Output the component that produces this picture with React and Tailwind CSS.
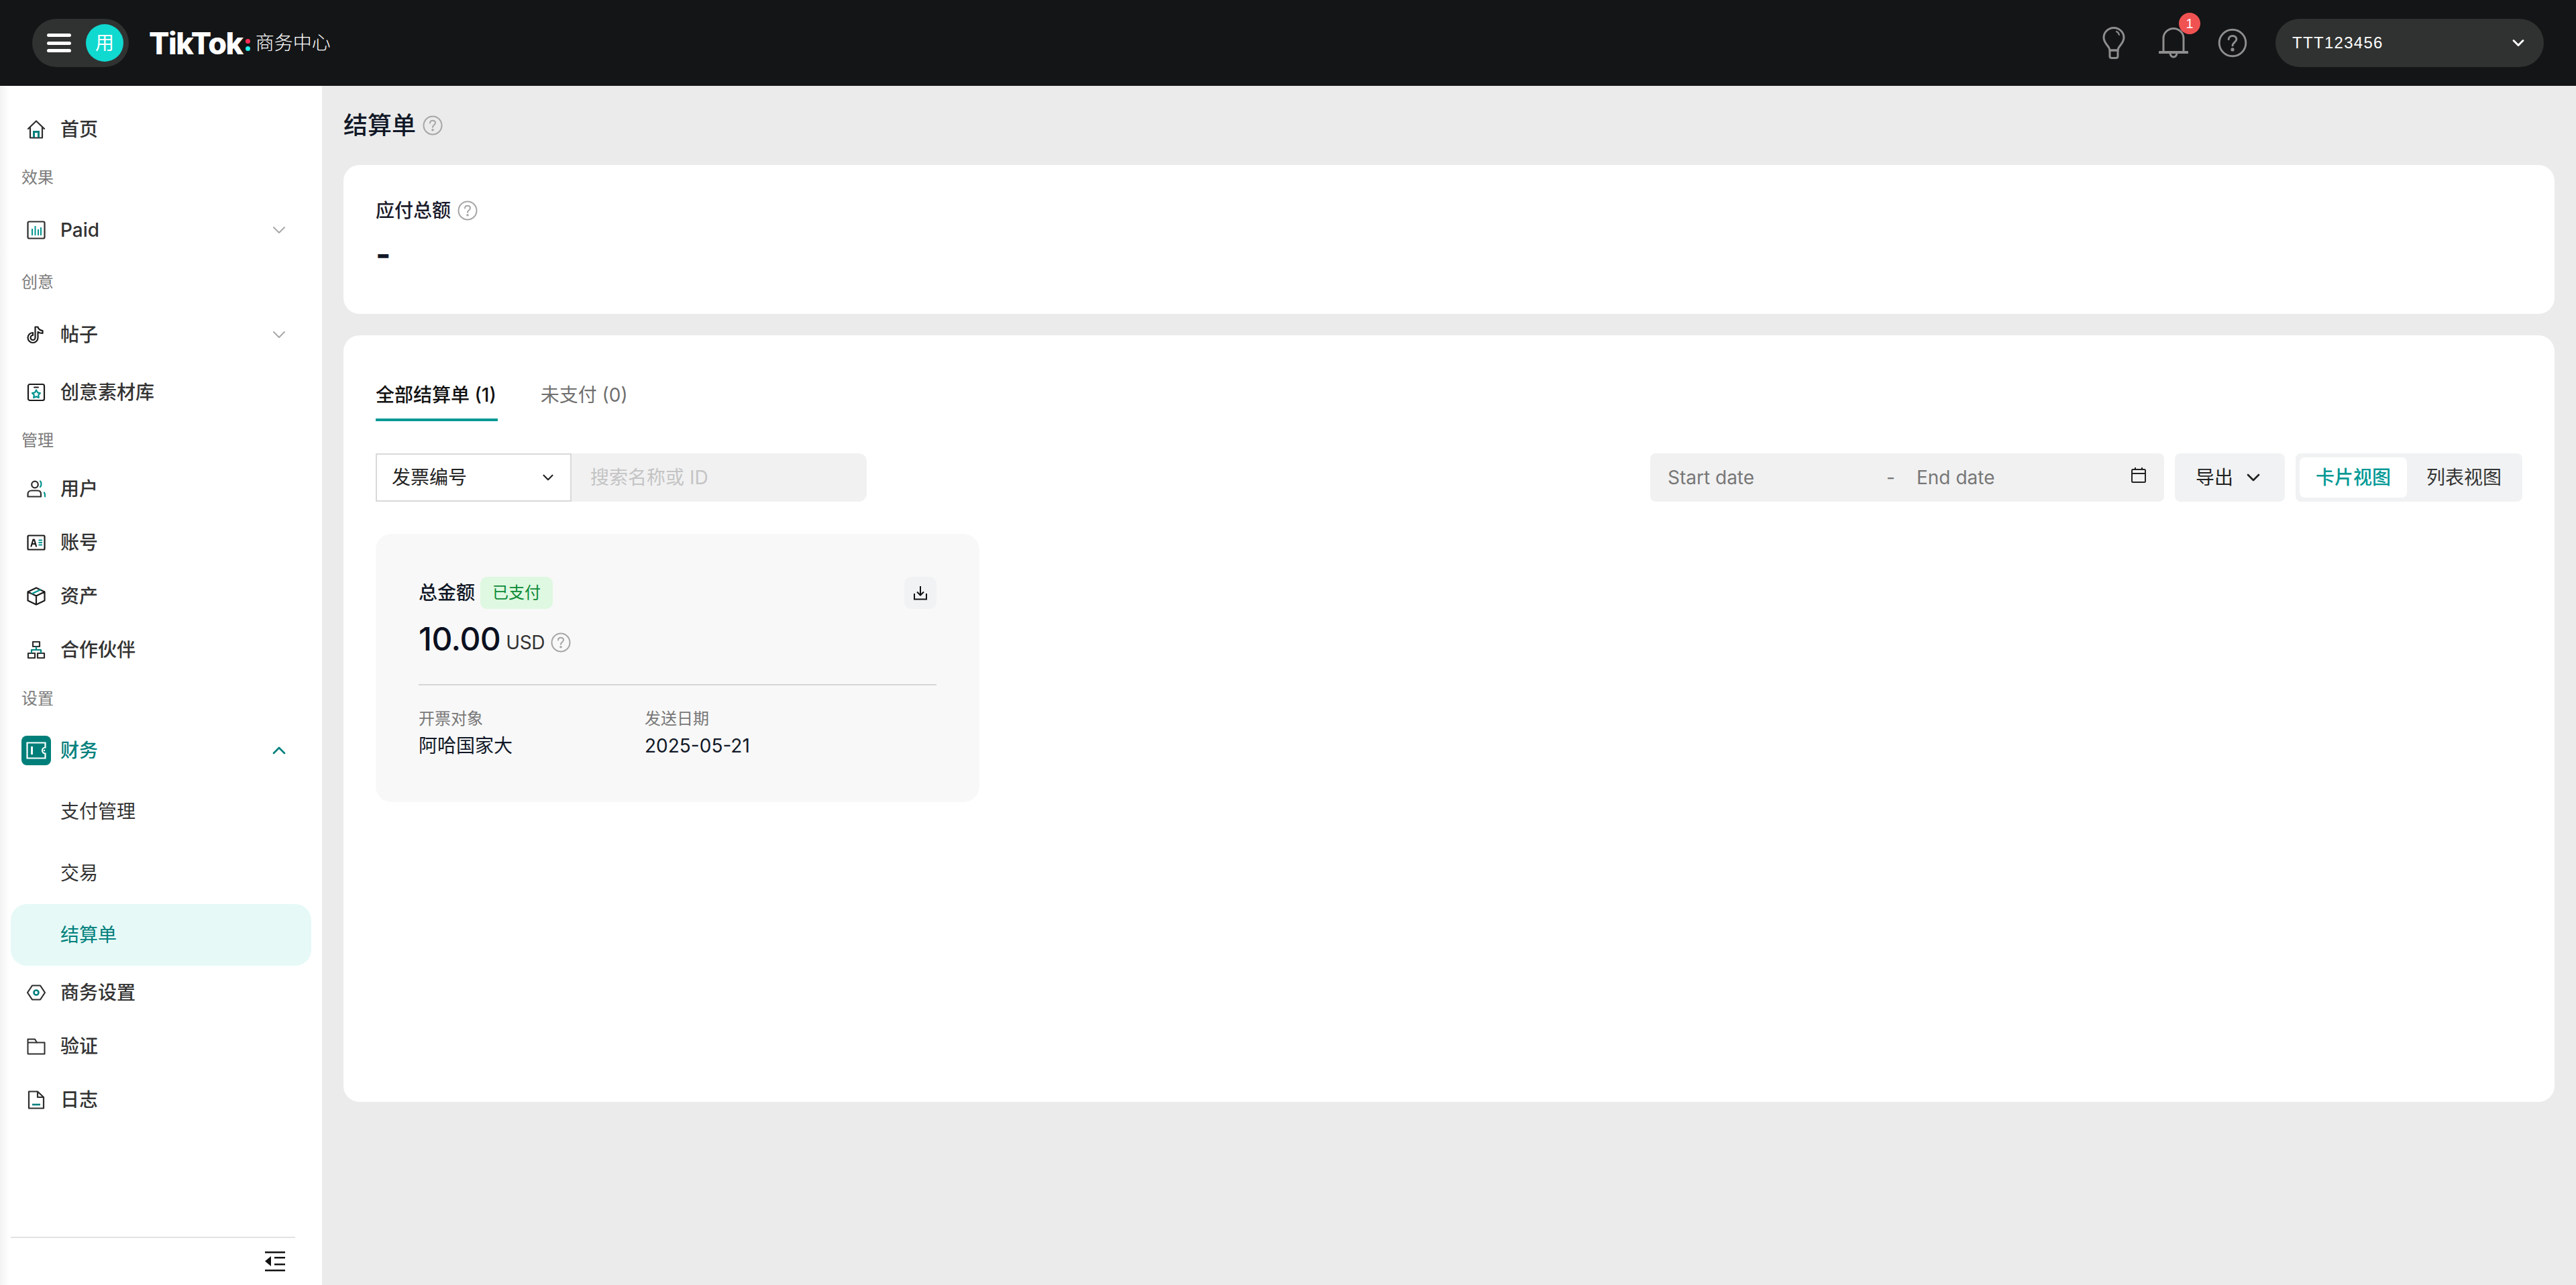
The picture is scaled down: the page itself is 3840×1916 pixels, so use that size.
import React from "react"
import { ChevronDown, ChevronUp } from "lucide-react"

const DARK = "#2e2e2e"
const TEAL = "#00948f"

function Svg({ children, className = "w-[28px] h-[28px]" }) {
    return (
        <svg viewBox="0 0 28 28" fill="none" strokeWidth="2" strokeLinecap="round" strokeLinejoin="round" className={`shrink-0 ${className}`}>
            {children}
        </svg>
    )
}

const HomeIcon = () => (
    <Svg>
        <path d="M2 13 14 1.500 26 13M5 10.500V26.500H23V10.500" stroke={DARK} strokeWidth="2.200" />
        <path d="M10.500 26V17.500H17.500V26" stroke="#00807c" strokeWidth="3" strokeLinecap="butt" strokeLinejoin="miter" />
    </Svg>
)
const PaidIcon = () => (
    <Svg>
        <rect x="1.500" y="1.500" width="25" height="25" rx="2" stroke={DARK} strokeWidth="2.200" />
        <path d="M8 12v10M12.500 8v14M17 13v9M21 10v12" stroke={TEAL} strokeLinecap="butt" />
    </Svg>
)
const PostIcon = () => (
    <Svg>
        <path d="M12.500 2.500H16.500C17 5.500 19.500 7.500 23.500 8V12C20.500 12 18.500 11.200 16.500 10V18.500A7.500 7.500 0 1 1 9 11V15A3.500 3.500 0 1 0 12.500 18.500Z" stroke="#1c1c1c" strokeWidth="2.200" />
    </Svg>
)
const CreativeIcon = () => (
    <Svg>
        <rect x="2" y="2" width="24" height="24" rx="2.500" stroke="#1c1c1c" strokeWidth="2.200" />
        <path d="M11 6.500H17" stroke="#1c1c1c" />
        <path d="M14 10.500 16 14.300 20 15 17.200 18 17.800 22 14 20.200 10.200 22 10.800 18 8 15 12 14.300Z" stroke={TEAL} strokeWidth="2.200" />
    </Svg>
)
const UserIcon = () => (
    <Svg>
        <circle cx="12" cy="7.500" r="4.800" stroke={DARK} strokeWidth="2.200" />
        <path d="M1.500 25.500V21.500C1.500 18.500 4 16.500 7 16.500H16C19 16.500 21 18.500 21 21.500V25.500Z" stroke={DARK} strokeWidth="2.200" />
        <path d="M20 2.500C22 4.500 22 9 20 11M26 19.500C27 21 27.200 23 27.200 25.500" stroke={TEAL} strokeWidth="2.200" />
    </Svg>
)
const AccountIcon = () => (
    <Svg>
        <rect x="1.500" y="3.500" width="25" height="21" rx="1.500" stroke="#1c1c1c" strokeWidth="2.200" />
        <path d="M6.500 19.500 9.500 9.500H11L14 19.500M8 16H12.500" stroke="#1c1c1c" strokeWidth="2.200" />
        <path d="M17.500 10.500H23M17.500 14H23M17.500 17.500H23" stroke={TEAL} strokeWidth="2" strokeLinecap="butt" />
    </Svg>
)
const AssetIcon = () => (
    <Svg>
        <path d="M14 1.500 26.500 7.500V20.500L14 26.500 1.500 20.500V7.500ZM1.500 7.500 14 13.500 26.500 7.500M14 13.500V26.500" stroke="#1c1c1c" strokeWidth="2.200" />
        <path d="M8 10 20 4.500" stroke={TEAL} strokeWidth="2.400" />
    </Svg>
)
const PartnerIcon = () => (
    <Svg>
        <rect x="9" y="2" width="10" height="7" stroke={DARK} strokeWidth="2.200" />
        <rect x="2" y="19" width="10" height="7" stroke={DARK} strokeWidth="2.200" />
        <rect x="16" y="19" width="10" height="7" stroke={DARK} strokeWidth="2.200" />
        <path d="M14 9V14M7 19V14H21V19" stroke="#00807c" strokeWidth="2.200" strokeLinecap="butt" />
    </Svg>
)
const SettingIcon = () => (
    <Svg>
        <path d="M8 3.500H20L27 14 20 24.500H8L1 14Z" stroke={DARK} strokeWidth="2.200" />
        <circle cx="14" cy="14" r="3.500" stroke="#00807c" strokeWidth="2.600" />
    </Svg>
)
const FolderIcon = () => (
    <Svg>
        <path d="M1.500 25V3.500H12L15 8.500H26.500V25.500H2Z" stroke={DARK} strokeWidth="2" />
        <path d="M2 8.500H15" stroke={DARK} strokeWidth="2" />
    </Svg>
)
const LogIcon = () => (
    <Svg>
        <path d="M3 1.500H16L25 10V26.500H3ZM16 2V10H25" stroke={DARK} strokeWidth="2.200" />
        <path d="M8 21H20" stroke="#00807c" strokeWidth="2.600" strokeLinecap="butt" />
    </Svg>
)
const WalletIcon = () => (
    <div className="w-[44px] h-[44px] rounded-[8px] bg-[#007f7a] flex items-center justify-center shrink-0 -ml-[8px] mr-[-8px]">
        <svg viewBox="0 0 30 26" fill="none" stroke="#fff" strokeWidth="2.200" className="w-[30px] h-[26px]">
            <path d="M1.500 1.500H28.500V8.500A4.500 4.500 0 0 0 28.500 17.500V24.500H1.500Z" />
            <path d="M8.500 7V19" strokeWidth="3" />
            <circle cx="27" cy="13" r="1.200" fill="#fff" stroke="none" />
        </svg>
    </div>
)

function HelpCircle({ size = "w-[30px] h-[30px]", color = "#a6a6a6", width = 2 }) {
    return (
        <svg viewBox="0 0 30 30" fill="none" stroke={color} strokeWidth={width} strokeLinecap="round" className={`shrink-0 ${size}`}>
            <circle cx="15" cy="15" r="13.500" />
            <path d="M11 11.500C11 9 13 7.800 15 7.800C17.500 7.800 19 9.300 19 11.300C19 14 15 14.500 15 17.800" />
            <circle cx="15" cy="21.800" r="0.800" fill={color} />
        </svg>
    )
}

function NavItem({ icon: Icon, label, chevron, className = "" }) {
    return (
        <div className={`h-[80px] flex items-center pl-[40px] pr-[48px] gap-[22px] text-[28px] font-medium text-[#333333] ${className}`}>
            <Icon />
            <span className="flex-1">{label}</span>
            {chevron && <ChevronDown className="w-[32px] h-[32px] text-[#a8a8a8]" strokeWidth={1.500} />}
        </div>
    )
}

function NavLabel({ label, className = "" }) {
    return <div className={`pl-[32px] text-[24px] leading-[32px] text-[#7b7b7b] ${className}`}>{label}</div>
}

function SubItem({ label, active }) {
    return (
        <div className={`h-[92px] mx-[16px] pl-[74px] flex items-center text-[28px] rounded-[24px] ${active ? "bg-[#e6f9f7] text-[#00807c]" : "text-[#333333]"}`}>
            {label}
        </div>
    )
}

function Sidebar() {
    return (
        <aside className="w-[480px] shrink-0 bg-[linear-gradient(to_right,#f3f3f3,#ffffff_14px)] flex flex-col pt-[25px] relative">
            <NavItem icon={HomeIcon} label="首页" />
            <NavLabel label="效果" className="mt-[16px]" />
            <NavItem icon={PaidIcon} label="Paid" chevron className="mt-[22px]" />
            <NavLabel label="创意" className="mt-[22px]" />
            <NavItem icon={PostIcon} label="帖子" chevron className="mt-[22px]" />
            <NavItem icon={CreativeIcon} label="创意素材库" className="mt-[6px]" />
            <NavLabel label="管理" className="mt-[16px]" />
            <NavItem icon={UserIcon} label="用户" className="mt-[16px]" />
            <NavItem icon={AccountIcon} label="账号" />
            <NavItem icon={AssetIcon} label="资产" />
            <NavItem icon={PartnerIcon} label="合作伙伴" />
            <NavLabel label="设置" className="mt-[17px]" />
            <div className="h-[80px] mt-[21px] flex items-center pl-[40px] pr-[48px] gap-[22px] text-[28px] font-medium text-[#00807c]">
                <WalletIcon />
                <span className="flex-1">财务</span>
                <ChevronUp className="w-[32px] h-[32px]" strokeWidth={2} />
            </div>
            <div className="mt-[5px]">
                <SubItem label="支付管理" />
                <SubItem label="交易" />
                <SubItem label="结算单" active />
            </div>
            <NavItem icon={SettingIcon} label="商务设置" />
            <NavItem icon={FolderIcon} label="验证" />
            <NavItem icon={LogIcon} label="日志" />
            <div className="mt-auto mx-[16px] w-[424px] border-t-2 border-[#e3e3e3] pt-[20px] pb-[20px] pr-[15px] flex justify-end">
                <svg viewBox="0 0 30 30" fill="#111" className="w-[30px] h-[30px]">
                    <rect x="0" y="0" width="30" height="2.500" />
                    <rect x="14" y="8" width="16" height="2.500" />
                    <rect x="14" y="18" width="16" height="2.500" />
                    <rect x="0" y="27" width="30" height="2.500" />
                    <path d="M9 7V22L0 14.500Z" />
                </svg>
            </div>
        </aside>
    )
}

function Header() {
    return (
        <header className="h-[128px] shrink-0 bg-[#141517] flex items-center pl-[48px] pr-[48px]">
            <div className="w-[144px] h-[72px] rounded-full bg-[#303231] flex items-center pl-[22px] gap-[22px]">
                <div className="w-[36px] h-[28px] flex flex-col justify-between">
                    <div className="h-[5px] rounded-full bg-white" />
                    <div className="h-[5px] rounded-full bg-white" />
                    <div className="h-[5px] rounded-full bg-white" />
                </div>
                <div className="w-[56px] h-[56px] rounded-full bg-[#10d9d0] text-white text-[28px] flex items-center justify-center">用</div>
            </div>
            <div className="ml-[30px] flex items-center text-white">
                <span className="text-[45px] leading-none font-extrabold tracking-[-1.500px]">TikTok</span>
                <span className="ml-[4px] mt-[6px] flex flex-col gap-[4px]">
                    <span className="block w-[7px] h-[7px] rounded-full bg-[#fe2c55]" />
                    <span className="block w-[7px] h-[7px] rounded-full bg-[#25f4ee]" />
                </span>
                <span className="ml-[8px] text-[28px] font-light">商务中心</span>
            </div>
            <div className="ml-auto flex items-center">
                <svg viewBox="0 0 34 48" fill="none" stroke="#8e8e8e" strokeWidth="3" strokeLinecap="round" className="w-[34px] h-[48px]">
                    <path d="M11 35C11 29 2 25 2 16A15 14.500 0 0 1 32 16C32 25 23 29 23 35Z" />
                    <path d="M11 35H23V44C23 46 22 46.500 20 46.500H14C12 46.500 11 46 11 44Z" />
                    <path d="M21 7C23 8 24.500 9.500 25 12" strokeWidth="2" />
                </svg>
                <div className="relative ml-[50px]">
                    <svg viewBox="0 0 44 46" fill="none" stroke="#8e8e8e" strokeWidth="3" strokeLinecap="round" className="w-[44px] h-[46px]">
                        <path d="M7 37V16A15 14.500 0 0 1 37 16V37" />
                        <path d="M1.500 37H42.500" strokeWidth="4" />
                        <path d="M17 38A5 6 0 0 0 27 38" />
                    </svg>
                    <div className="absolute -top-[22px] left-[30px] w-[32px] h-[32px] rounded-full bg-[#f05252] text-white text-[20px] flex items-center justify-center font-['Liberation_Sans',sans-serif]">1</div>
                </div>
                <div className="ml-[44px]">
                    <HelpCircle size="w-[44px] h-[44px]" color="#8e8e8e" width={2} />
                </div>
                <div className="ml-[42px] w-[400px] h-[72px] rounded-full bg-[#303231] flex items-center pl-[25px] pr-[24px] text-white">
                    <span className="flex-1 text-[24px] tracking-[1.300px] font-['Liberation_Sans',sans-serif]">TTT123456</span>
                    <ChevronDown className="w-[28px] h-[28px]" strokeWidth={2.500} />
                </div>
            </div>
        </header>
    )
}

function Toolbar() {
    return (
        <div className="mt-[48px] flex justify-between h-[72px] text-[28px]">
            <div className="flex">
                <div className="w-[292px] border-2 border-[#d9d9d9] bg-white flex items-center pl-[22px] pr-[20px] text-[#222222]">
                    <span className="flex-1">发票编号</span>
                    <ChevronDown className="w-[26px] h-[26px]" strokeWidth={2} />
                </div>
                <div className="w-[440px] bg-[#f1f1f2] rounded-r-[12px] flex items-center pl-[28px] text-[#c4c4c4]">搜索名称或 ID</div>
            </div>
            <div className="flex gap-[16px]">
                <div className="w-[766px] bg-[#f1f1f2] rounded-[8px] flex items-center pl-[26px] pr-[26px] text-[#777777]">
                    <span className="w-[326px]">Start date</span>
                    <span className="w-[45px]">-</span>
                    <span className="flex-1">End date</span>
                    <svg viewBox="0 0 24 26" fill="none" stroke="#222" strokeWidth="2" className="w-[24px] h-[26px] -mt-[6px]">
                        <rect x="2" y="4" width="20" height="19" rx="1.500" />
                        <path d="M2 10H22M7 1V5M17 1V5" />
                    </svg>
                </div>
                <div className="w-[164px] bg-[#f1f2f3] rounded-[8px] flex items-center justify-center gap-[14px] text-[#222222]">
                    导出
                    <ChevronDown className="w-[32px] h-[32px]" strokeWidth={2} />
                </div>
                <div className="w-[338px] bg-[#f1f2f3] rounded-[8px] p-[6px] flex items-center">
                    <div className="w-[160px] h-[60px] bg-white rounded-[8px] flex items-center justify-center text-[#009995] font-medium">卡片视图</div>
                    <div className="flex-1 pl-[4px] text-center text-[#333333]">列表视图</div>
                </div>
            </div>
        </div>
    )
}

function InvoiceCard() {
    return (
        <div className="mt-[48px] w-[900px] h-[400px] bg-[#f8f8f8] rounded-[24px] pt-[64px] px-[64px]">
            <div className="flex items-center h-[48px]">
                <span className="text-[28px] font-medium text-[#111827]">总金额</span>
                <span className="ml-[8px] w-[108px] h-[48px] rounded-[10px] bg-[#dff8e1] text-[#0c8a37] text-[24px] flex items-center justify-center">已支付</span>
                <div className="ml-auto w-[48px] h-[48px] rounded-[10px] bg-[#f1f2f4] flex items-center justify-center">
                    <svg viewBox="0 0 22 22" fill="none" stroke="#111" strokeWidth="2" className="w-[22px] h-[22px]">
                        <path d="M11 1V14M6 9.500 11 14.500 16 9.500M2 12V20.500H20V12" />
                    </svg>
                </div>
            </div>
            <div className="mt-[16px] h-[58px] flex items-center">
                <span className="text-[48px] leading-none tracking-[-0.500px] text-[#0b1020] font-medium">10.00</span>
                <span className="ml-[8px] mt-[10px] text-[28px] tracking-[-0.500px] text-[#333333]">USD</span>
                <span className="ml-[9px] mt-[10px]"><HelpCircle /></span>
            </div>
            <div className="mt-[38px] h-[2px] bg-[#d6d6d6]" />
            <div className="mt-[32px] flex">
                <div className="w-[337px]">
                    <div className="text-[24px] leading-[36px] text-[#777777]">开票对象</div>
                    <div className="text-[28px] leading-[40px] text-[#111827] mt-[2px]">阿哈国家大</div>
                </div>
                <div>
                    <div className="text-[24px] leading-[36px] text-[#777777]">发送日期</div>
                    <div className="text-[28px] leading-[40px] text-[#111827] mt-[2px]">2025-05-21</div>
                </div>
            </div>
        </div>
    )
}

export default function App() {
    return (
        <div className="w-[3840px] h-[1916px] flex flex-col overflow-hidden font-['Inter','Noto_Sans_CJK_SC',sans-serif]">
            <Header />
            <div className="flex flex-1 min-h-0">
                <Sidebar />
                <main className="flex-1 bg-[#ebebeb] px-[32px]">
                    <div className="h-[118px] flex items-center gap-[10px]">
                        <h1 className="text-[36px] font-medium text-[#111827]">结算单</h1>
                        <HelpCircle />
                    </div>
                    <section className="h-[222px] bg-white rounded-[24px] px-[48px] pt-[50px]">
                        <div className="flex items-center gap-[10px] h-[36px]">
                            <span className="text-[28px] text-[#1a1a2a] font-medium">应付总额</span>
                            <HelpCircle />
                        </div>
                        <div className="text-[48px] leading-[60px] mt-[17px] font-bold text-[#111827]">-</div>
                    </section>
                    <section className="mt-[32px] h-[1143px] bg-white rounded-[24px] px-[48px]">
                        <div className="pt-[70px] flex gap-[64px] text-[28px]">
                            <div className="pb-[16px] pr-[2px] border-b-4 border-[#009995] font-medium text-[#111111] leading-[38px]">全部结算单 (1)</div>
                            <div className="text-[#6f6f6f] leading-[38px]">未支付 (0)</div>
                        </div>
                        <Toolbar />
                        <InvoiceCard />
                    </section>
                </main>
            </div>
        </div>
    )
}
